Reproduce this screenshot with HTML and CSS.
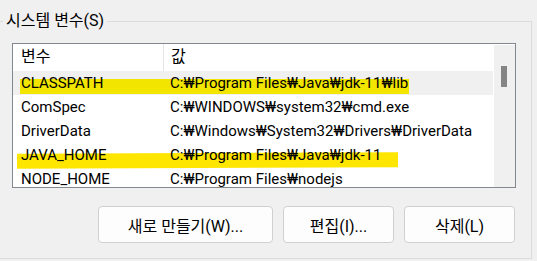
FILE: index.html
```html
<!DOCTYPE html>
<html lang="ko">
<head>
  <meta charset="UTF-8" />
  <meta name="viewport" content="width=device-width, initial-scale=1.0"/>
  <title>시스템 변수</title>
  <link rel="stylesheet" href="styles.css">
</head>
<body>

<fieldset class="group">
  <legend>시스템 변수(S)</legend>

  <!-- Variable list -->
  <div class="list">
    <div class="table">
      <div class="row head">
        <div class="cell name">변수</div>
        <div class="cell value">값</div>
      </div>
      <div class="row selected">
        <span class="mark mark-1"></span>
        <div class="cell name">CLASSPATH</div>
        <div class="cell value">C:₩Program Files₩Java₩jdk-11₩lib</div>
      </div>
      <div class="row">
        <div class="cell name">ComSpec</div>
        <div class="cell value">C:₩WINDOWS₩system32₩cmd.exe</div>
      </div>
      <div class="row">
        <div class="cell name">DriverData</div>
        <div class="cell value">C:₩Windows₩System32₩Drivers₩DriverData</div>
      </div>
      <div class="row">
        <span class="mark mark-2"></span>
        <div class="cell name">JAVA_HOME</div>
        <div class="cell value">C:₩Program Files₩Java₩jdk-11</div>
      </div>
      <div class="row">
        <div class="cell name">NODE_HOME</div>
        <div class="cell value">C:₩Program Files₩nodejs</div>
      </div>
    </div>
    <div class="scrollbar">
      <div class="thumb"></div>
    </div>
  </div>

  <!-- Actions -->
  <div class="actions">
    <button type="button" class="btn btn-wide">새로 만들기(W)...</button>
    <button type="button" class="btn">편집(I)...</button>
    <button type="button" class="btn">삭제(L)</button>
  </div>
</fieldset>

</body>
</html>
```

FILE: styles.css
```css
body {
  margin: 0;
  background: #f0f0f0;
  font-family: Roboto, "Noto Sans CJK KR", sans-serif;
  font-size: 15px;
  color: #000;
  overflow: hidden;
}

.group {
  box-sizing: border-box;
  width: 534px;
  height: 248px;
  margin: 11px 0 0 -2px;
  padding: 0;
  border: 1px solid #dcdcdc;
}

.group legend {
  margin-left: 4px;
  padding: 0 3px;
  font-size: 16px;
  line-height: 20px;
}

.list {
  box-sizing: border-box;
  width: 504px;
  height: 145px;
  margin: 12px 0 0 13px;
  border: 1px solid #828790;
  background: white;
  display: flex;
  overflow: hidden;
}

.table {
  flex: 1;
  margin-right: 1px;
}

.row {
  position: relative;
  display: flex;
  height: 24px;
  line-height: 24px;
  white-space: nowrap;
}

.row.head {
  height: 27px;
  line-height: 25px;
  font-size: 16px;
}

.row.selected {
  background: #f0f0f0;
}

.cell {
  position: relative;
  z-index: 1;
}

.cell.name {
  width: 142px;
  padding-left: 8px;
}

.cell.value {
  padding-left: 7px;
}

.head .cell.name {
  border-right: 1px solid #e5e5e5;
}

/* highlighter strokes drawn over the rows */
.mark {
  position: absolute;
  z-index: 0;
  background: #f2e600;
}

.mark-1 {
  left: 7px;
  width: 389px;
  top: 8px;
  height: 15px;
}

.mark-2 {
  left: 4px;
  width: 381px;
  top: 10px;
  height: 15px;
  background: #ffe600;
  transform: rotate(-0.2deg);
}

.scrollbar {
  width: 21px;
  margin-top: 1px;
  background: #f0f0f0;
  position: relative;
}

.thumb {
  position: absolute;
  left: 7px;
  top: 21px;
  width: 6px;
  height: 21px;
  background: #858585;
}

.actions {
  display: flex;
  justify-content: flex-end;
  gap: 10px;
  margin: 18px 16px 0 0;
}

.btn {
  box-sizing: border-box;
  width: 111px;
  height: 37px;
  background: #fdfdfd;
  border: 1px solid #d0d0d0;
  border-radius: 4px;
  font-family: inherit;
  font-size: 16px;
  color: #000;
  padding: 0;
}

.btn-wide {
  width: 175px;
}
```
